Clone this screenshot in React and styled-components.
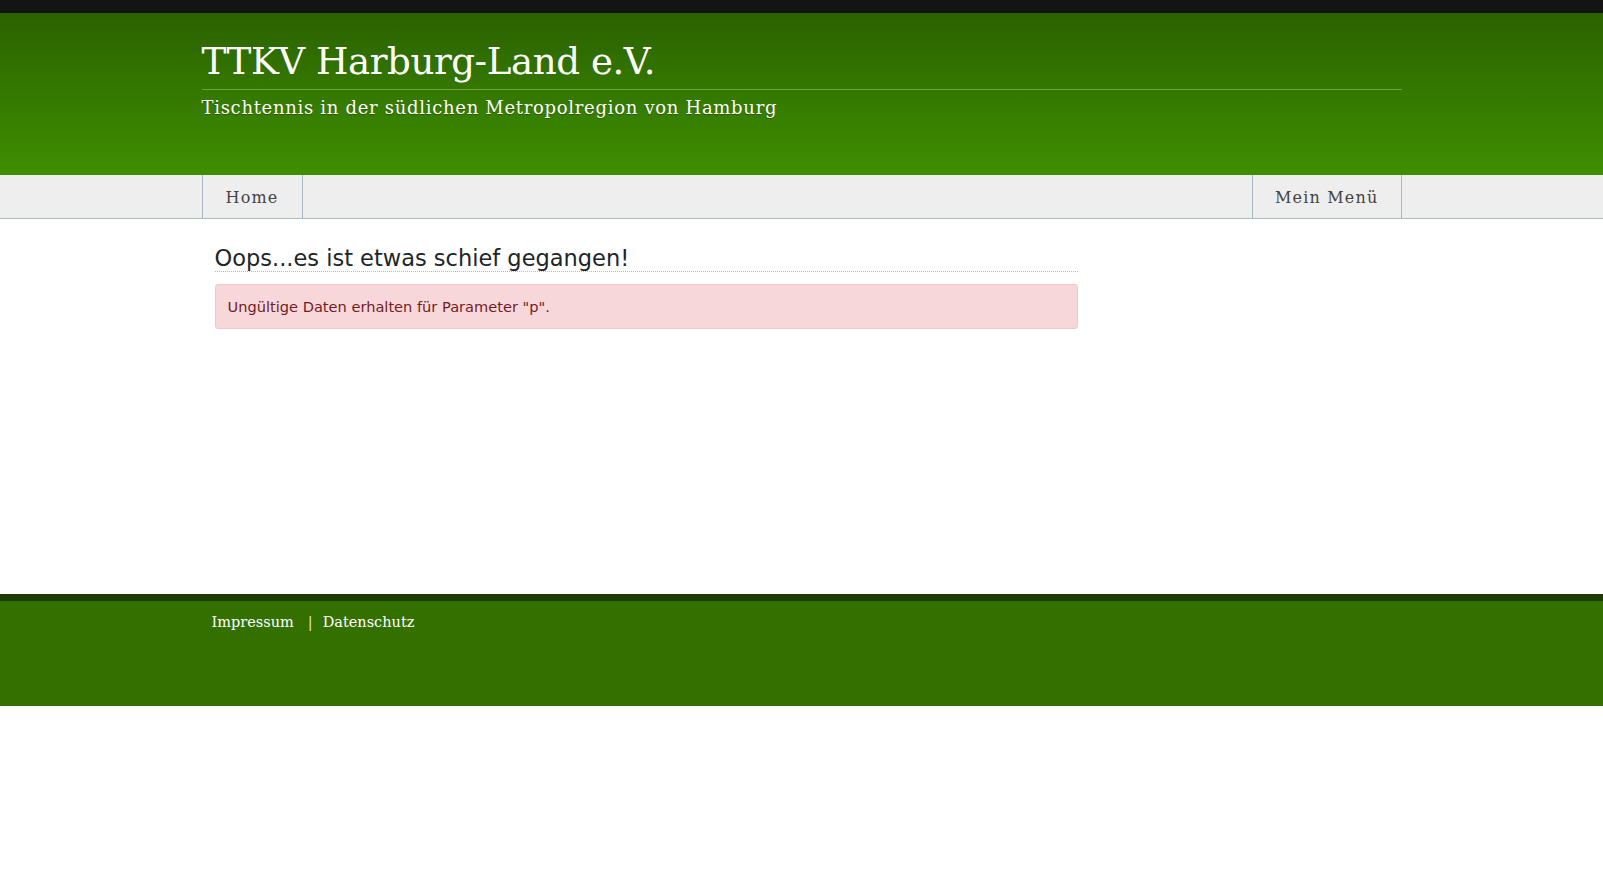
import React from "react";
import styled, { createGlobalStyle } from "styled-components";

const Global = createGlobalStyle`
  html, body { margin: 0; padding: 0; background: #ffffff; }
  body { font-family: "DejaVu Sans", Verdana, sans-serif; }
  * { box-sizing: border-box; }
`;

const TopBar = styled.div`
  height: 13px;
  background: #141414;
`;

const Header = styled.header`
  height: 162px;
  background: linear-gradient(to bottom, #2b6200 0%, #3e8f00 100%);
`;

const Container = styled.div`
  width: 1200px;
  margin: 0 auto;
`;

const Brand = styled(Container)`
  padding-top: 22px;
`;

const Title = styled.h1`
  margin: 0;
  padding-bottom: 2px;
  font-family: "DejaVu Serif", "Liberation Serif", serif;
  font-weight: normal;
  font-size: 37.2px;
  line-height: 52px;
  color: #ffffff;
  letter-spacing: -0.45px;
  border-bottom: 1px solid rgba(255, 255, 255, 0.3);
`;

const Subtitle = styled.p`
  margin: 7px 0 0;
  font-family: "DejaVu Serif", "Liberation Serif", serif;
  font-size: 18px;
  line-height: 22px;
  letter-spacing: 0.7px;
  color: #ffffff;
  text-shadow: 0 1px 1px rgba(0, 0, 0, 0.3);
`;

const Nav = styled.nav`
  background: #eeeeee;
  border-bottom: 1px solid #aabbc8;
`;

const NavInner = styled(Container)`
  display: flex;
  justify-content: space-between;
  height: 43px;
`;

const NavItem = styled.a`
  display: flex;
  align-items: center;
  padding: 2px ${(p) => p.$pad}px 0;
  border-left: 1px solid #aab8c5;
  border-right: 1px solid #aab8c5;
  font-family: "DejaVu Serif", "Liberation Serif", serif;
  font-size: 16px;
  letter-spacing: 1.2px;
  color: #444444;
  text-decoration: none;
`;

const Main = styled(Container)`
  padding: 26px 0 0 13px;
  min-height: 375px;
`;

const Column = styled.div`
  width: 863px;
`;

const Heading = styled.h2`
  margin: 0;
  font-family: "DejaVu Sans", Verdana, sans-serif;
  font-weight: normal;
  font-size: 22.5px;
  line-height: 26px;
  color: #212529;
  border-bottom: 1px dotted #b8b8b8;
`;

const Alert = styled.div`
  margin-top: 12px;
  height: 45px;
  padding: 0 12px;
  display: flex;
  align-items: center;
  background: #f8d7da;
  border: 1px solid #f5c6cb;
  border-radius: 3px;
  color: #721c24;
  font-family: "DejaVu Sans", Verdana, sans-serif;
  font-size: 14.6px;
`;

const Footer = styled.footer`
  background: #337000;
  border-top: 7px solid #1e3b05;
  height: 112px;
`;

const FooterLinks = styled(Container)`
  display: flex;
  align-items: baseline;
  padding: 13px 0 0 10px;
  font-family: "DejaVu Serif", "Liberation Serif", serif;
  font-size: 14.5px;
  color: #ffffff;
`;

const FooterLink = styled.a`
  color: #ffffff;
  text-decoration: none;
`;

const Sep = styled.span`
  margin: 0 10px 0 14px;
  color: #dfe8d6;
`;

export default function App() {
  return (
    <>
      <Global />
      <TopBar />
      <Header>
        <Brand>
          <Title>TTKV Harburg-Land e.V.</Title>
          <Subtitle>Tischtennis in der südlichen Metropolregion von Hamburg</Subtitle>
        </Brand>
      </Header>
      <Nav>
        <NavInner>
          <NavItem href="#" $pad={23}>Home</NavItem>
          <NavItem href="#" $pad={22}>Mein Menü</NavItem>
        </NavInner>
      </Nav>
      <Main>
        <Column>
          <Heading>Oops...es ist etwas schief gegangen!</Heading>
          <Alert>Ungültige Daten erhalten für Parameter "p".</Alert>
        </Column>
      </Main>
      <Footer>
        <FooterLinks>
          <FooterLink href="#">Impressum</FooterLink>
          <Sep>|</Sep>
          <FooterLink href="#">Datenschutz</FooterLink>
        </FooterLinks>
      </Footer>
    </>
  );
}
